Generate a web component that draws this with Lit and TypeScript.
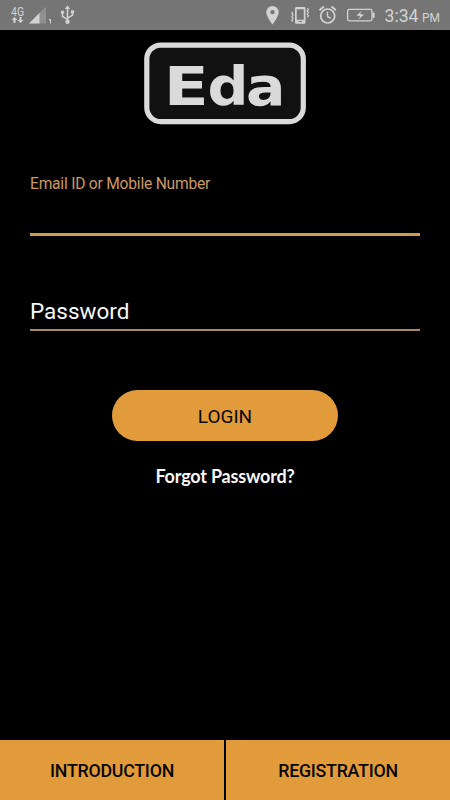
import { LitElement, html, css } from "lit";
import { customElement, property } from "lit/decorators.js";

@customElement("status-bar")
class StatusBar extends LitElement {
  static styles = css`
    :host { display: block; height: 30px; background: #757575; color: #d2d2d2; }
    svg { display: block; width: 450px; height: 30px; }
    text { font-family: Roboto, sans-serif; fill: currentColor; }
    .net { font-size: 12px; }
    .clock { font-size: 18.5px; }
    .half { font-size: 13px; }
    .line { fill: none; stroke: currentColor; }
  `;
  render() {
    return html`
      <svg viewBox="0 0 450 30" fill="currentColor">
        <text class="net" x="11" y="16" textLength="13" lengthAdjust="spacingAndGlyphs">4G</text>
        <path d="M14.5 17l3 3h-2v3h-2v-3h-2zM20.5 23l-3-3h2v-3h2v3h2z" />
        <path d="M46 6.5V23.5H29z" opacity=".3" />
        <path d="M39.5 13V23.5H29z" />
        <path d="M49 19h2v4.5h-1v-3h-1z" />
        <g class="line" stroke-width="1.5">
          <path d="M67.5 8V22M67.5 19.3L62.5 16.5V12.5M67.5 18L72.5 15.3V12" />
        </g>
        <path d="M67.5 5.2l2.6 3.8h-5.2z" />
        <circle cx="67.5" cy="21.8" r="2.2" />
        <circle cx="62.5" cy="12.3" r="1.7" />
        <path d="M70.9 10.4h3.2v3.2h-3.2z" />

        <path fill-rule="evenodd" d="M272.5 6a6.2 6.2 0 0 0-6.2 6.2c0 4.6 6.2 12.3 6.2 12.3s6.2-7.7 6.2-12.3A6.2 6.2 0 0 0 272.5 6zm0 8.3a2.2 2.2 0 1 1 0-4.4 2.2 2.2 0 0 1 0 4.4z" />

        <path fill-rule="evenodd" d="M296.3 7h7.9q1.3 0 1.3 1.3v14.2q0 1.3-1.3 1.3h-7.9q-1.3 0-1.3-1.3V8.3q0-1.3 1.3-1.3zm.4 2.3v10.4h7.1V9.3zm1.8 11.6v1.1h3.5v-1.1z" />
        <path class="line" stroke-width="1.2" d="M292.8 12l-1 1.5 1.3 1.5-1.3 1.7 1.3 1.6-1.3 1.7 1 1.6M307.4 8l1 1.5-1.3 1.5 1.3 1.6-1.3 1.7 1.3 1.6-1 1.5" />

        <circle class="line" cx="327.7" cy="16" r="7" stroke-width="1.7" />
        <path class="line" stroke-width="1.4" d="M327.5 11.8v4.5l3.2 2.1" />
        <path class="line" stroke-width="1.9" d="M319.5 10.2l4.4-3.6M335.9 10.2l-4.4-3.6" />

        <rect class="line" x="347.6" y="9.3" width="24.4" height="11.6" rx="1.8" stroke-width="1.3" />
        <path d="M372.6 12.5h1q1 0 1 1v3.5q0 1-1 1h-1z" />
        <path d="M361.8 10.7l-5.2 4.8 3.7.6-2.3 3.7 6-5-3.9-.7z" />

        <text class="clock" x="384.5" y="22.3" textLength="34" lengthAdjust="spacingAndGlyphs">3:34</text>
        <text class="half" x="422" y="22" textLength="18" lengthAdjust="spacingAndGlyphs">PM</text>
      </svg>
    `;
  }
}

@customElement("eda-logo")
class EdaLogo extends LitElement {
  static styles = css`
    :host { display: block; width: 162px; height: 83px; }
    svg { display: block; }
    text { font: 700 54px "DejaVu Sans", sans-serif; fill: #dadada; }
  `;
  render() {
    return html`
      <svg width="162" height="83" viewBox="0 0 162 83">
        <rect x="2.8" y="3.1" width="156.5" height="76.5" rx="14" fill="#111" stroke="#dadada" stroke-width="5.2" />
        <text x="19.8" y="62.5" textLength="45" lengthAdjust="spacingAndGlyphs">E</text>
        <text x="63.5" y="62.5" textLength="41" lengthAdjust="spacingAndGlyphs">d</text>
        <text x="102" y="62.5" textLength="39.5" lengthAdjust="spacingAndGlyphs">a</text>
      </svg>
    `;
  }
}

@customElement("form-field")
class FormField extends LitElement {
  @property() label = "";
  @property({ type: Boolean, reflect: true }) active = false;
  static styles = css`
    :host { display: flex; flex-direction: column; border-bottom: 2px solid #a98865; box-sizing: border-box; height: 34px; }
    :host([active]) { height: 61px; border-bottom: 3px solid #d09a50; }
    .label { font: 22.5px/28px Roboto, sans-serif; color: #f8f8f8; white-space: nowrap; }
    :host([active]) .label { font-size: 15.6px; line-height: 18px; letter-spacing: -0.22px; color: #cb9962; }
  `;
  render() {
    return html`<span class="label">${this.label}</span>`;
  }
}

@customElement("app-root")
class AppRoot extends LitElement {
  static styles = css`
    :host { display: flex; flex-direction: column; width: 450px; height: 800px; background: #000; overflow: hidden; font-family: Roboto, sans-serif; }
    button { border: 0; padding: 0; color: #080603; background: #e29b3b; font-family: Roboto, sans-serif; white-space: nowrap; }
    main { flex: 1; display: flex; flex-direction: column; align-items: center; padding: 12px 30px 0; }
    form-field { align-self: stretch; }
    .user { margin-top: 50px; }
    .pass { margin-top: 61px; }
    .login { width: 226px; height: 51px; margin-top: 59px; padding-top: 2px; border-radius: 26px; font-size: 19px; }
    .forgot { margin-top: 23px; font: 700 18px/24px Lato, sans-serif; letter-spacing: -0.2px; color: #f6f6f6; white-space: nowrap; }
    nav { display: grid; grid-template-columns: 224px 224px; gap: 2px; height: 60px; }
    nav button { padding-top: 1px; font-size: 17.8px; font-weight: 500; letter-spacing: -0.25px; }
  `;
  render() {
    return html`
      <status-bar></status-bar>
      <main>
        <eda-logo></eda-logo>
        <form-field class="user" label="Email ID or Mobile Number" active></form-field>
        <form-field class="pass" label="Password"></form-field>
        <button class="login">LOGIN</button>
        <span class="forgot">Forgot Password?</span>
      </main>
      <nav>
        <button>INTRODUCTION</button>
        <button>REGISTRATION</button>
      </nav>
    `;
  }
}
